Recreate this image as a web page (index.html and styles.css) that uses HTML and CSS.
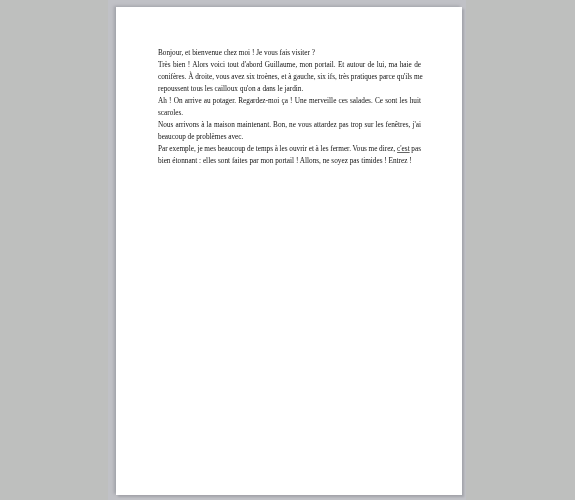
FILE: index.html
```html
<!DOCTYPE html>
<html lang="fr">

<head>
    <meta charset="UTF-8">
    <title>Document</title>
    <link rel="stylesheet" href="styles.css">
</head>

<body>
    <div class="viewer">
        <div class="paper">
            <div class="text">
                <p class="line">Bonjour, et bienvenue chez moi ! Je vous fais visiter ?</p>
                <p class="line full">Très bien ! Alors voici tout d'abord Guillaume, mon portail. Et autour de lui, ma haie de</p>
                <p class="line full">conifères. À droite, vous avez six troènes, et à gauche, six ifs, très pratiques parce qu'ils me</p>
                <p class="line">repoussent tous les cailloux qu'on a dans le jardin.</p>
                <p class="line full">Ah ! On arrive au potager. Regardez-moi ça ! Une merveille ces salades. Ce sont les huit</p>
                <p class="line">scaroles.</p>
                <p class="line full">Nous arrivons à la maison maintenant. Bon, ne vous attardez pas trop sur les fenêtres, j'ai</p>
                <p class="line">beaucoup de problèmes avec.</p>
                <p class="line full tight">Par exemple, je mes beaucoup de temps à les ouvrir et à les fermer. Vous me direz, <span class="spell">c'est</span> pas</p>
                <p class="line">bien étonnant : elles sont faites par mon portail ! Allons, ne soyez pas timides ! Entrez !</p>
            </div>
        </div>
    </div>
</body>

</html>
```

FILE: styles.css
```css
* {
    margin: 0;
    padding: 0;
    box-sizing: border-box;
}

html,
body {
    height: 500px;
    overflow: hidden;
}

body {
    padding-left: 108px;
    background: #bebfbe;
}

.viewer {
    width: 358px;
    height: 500px;
    padding: 7px 4px 5px 8px;
    background: #c0c1c6;
}

.paper {
    height: 488px;
    padding: 40px 41px 0 42px;
    background: #fff;
    box-shadow: -2px -1px 3px #a0a2a8, 2px 2px 2px #a4a6ac;
}

.text {
    font-family: "Liberation Serif", serif;
    font-size: 7.25px;
    line-height: 12px;
    color: #111;
    filter: blur(0.35px);
}

.line {
    white-space: nowrap;
}

.full {
    text-align: justify;
    text-align-last: justify;
}

.tight {
    word-spacing: -0.15px;
}

.spell {
    text-decoration: underline;
    text-decoration-color: #666;
}
```
